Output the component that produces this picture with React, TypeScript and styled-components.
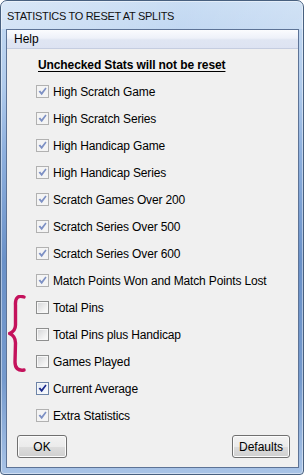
import React from "react";
import styled, { createGlobalStyle } from "styled-components";

type BoxState = "locked" | "on" | "off";

const stats: { label: string; state: BoxState }[] = [
  { label: "High Scratch Game", state: "locked" },
  { label: "High Scratch Series", state: "locked" },
  { label: "High Handicap Game", state: "locked" },
  { label: "High Handicap Series", state: "locked" },
  { label: "Scratch Games Over 200", state: "locked" },
  { label: "Scratch Series Over 500", state: "locked" },
  { label: "Scratch Series Over 600", state: "locked" },
  { label: "Match Points Won and Match Points Lost", state: "locked" },
  { label: "Total Pins", state: "off" },
  { label: "Total Pins plus Handicap", state: "off" },
  { label: "Games Played", state: "off" },
  { label: "Current Average", state: "on" },
  { label: "Extra Statistics", state: "locked" },
];

const GlobalStyle = createGlobalStyle`
  html, body {
    margin: 0;
    padding: 0;
    background: #ffffff;
  }
  body {
    font-family: "Liberation Sans", Arial, sans-serif;
  }
`;

function Tick({ locked }: { locked: boolean }) {
  return (
    <svg width="9" height="9" viewBox="0 0 9 9">
      <path
        d="M0.6 4.6 L2.2 3.4 L3.6 5.2 L7.4 0.4 L8.6 1.4 L3.7 8.2 Z"
        fill={locked ? "#7d90c4" : "#1c2a8c"}
      />
    </svg>
  );
}

function App() {
  return (
    <>
      <GlobalStyle />
      <Window>
        <TitleBar>STATISTICS TO RESET AT SPLITS</TitleBar>
        <Client>
          <MenuBar>
            <MenuItem>Help</MenuItem>
          </MenuBar>
          <Content>
            <Heading>Unchecked Stats will not be reset</Heading>
            <List>
              {stats.map((s) => (
                <Row key={s.label}>
                  <Box $state={s.state}>{s.state !== "off" && <Tick locked={s.state === "locked"} />}</Box>
                  <Label>{s.label}</Label>
                </Row>
              ))}
            </List>
            <ButtonRow>
              <Button $width={50}>OK</Button>
              <Button $width={58}>Defaults</Button>
            </ButtonRow>
            <Brace width="20" height="80" viewBox="0 0 20 80">
              <path
                d="M16 2 C10 0 7 3 7.5 10 L7.5 30 C7.5 35 5 37 1.5 38.5 C5 40 7.5 43 7.5 48 L7 67 C7 73 10 76 16 75"
                fill="none"
                stroke="#c4125c"
                strokeWidth="3.4"
                strokeLinecap="round"
                strokeLinejoin="round"
              />
            </Brace>
          </Content>
        </Client>
      </Window>
    </>
  );
}

export default App;

const Window = styled.div`
  box-sizing: border-box;
  width: 304px;
  height: 475px;
  display: flex;
  flex-direction: column;
  padding: 0 4px 6px 5px;
  border: 1px solid #48607f;
  border-radius: 7px 7px 4px 4px;
  background: linear-gradient(
    180deg,
    #c6dbf3 0%,
    #b0cbec 18%,
    #8eb0de 32%,
    #6a91c8 55%,
    #759acd 80%,
    #a9c4e7 100%
  );
  box-shadow: inset 0 0 0 1px rgba(255, 255, 255, 0.45);
`;

const TitleBar = styled.div`
  height: 28px;
  display: flex;
  align-items: center;
  font-size: 11px;
  letter-spacing: -0.3px;
  color: #111;
  margin: 0 -4px 0 -5px;
  padding: 1px 0 0 6px;
  background: linear-gradient(100deg, rgba(255, 255, 255, 0.35) 0%, rgba(255, 255, 255, 0.05) 60%, rgba(255, 255, 255, 0.2) 100%);
  border-radius: 6px 6px 0 0;
`;

const Client = styled.div`
  flex: 1;
  display: flex;
  flex-direction: column;
  border: 1px solid #5d7396;
  background: #f0f0f0;
`;

const MenuBar = styled.div`
  height: 18px;
  display: flex;
  align-items: center;
  border-bottom: 1px solid #c5cde0;
  background: linear-gradient(180deg, #fbfcfe 0%, #eef1f9 45%, #e0e6f3 55%, #dde3f2 100%);
`;

const MenuItem = styled.span`
  font-size: 12px;
  color: #000;
  padding-left: 7px;
`;

const Content = styled.div`
  position: relative;
  flex: 1;
  display: flex;
  flex-direction: column;
  padding: 8px 8px 9px 29px;
`;

const Heading = styled.div`
  height: 16px;
  line-height: 16px;
  margin-left: 2px;
  font-size: 12px;
  font-weight: bold;
  letter-spacing: -0.1px;
  text-decoration: underline;
  text-underline-offset: 2px;
  color: #000;
`;

const List = styled.div`
  display: flex;
  flex-direction: column;
  margin-top: 5px;
`;

const Row = styled.div`
  height: 27px;
  display: flex;
  align-items: center;
`;

const Box = styled.span<{ $state: BoxState }>`
  box-sizing: border-box;
  width: 13px;
  height: 13px;
  display: flex;
  align-items: center;
  justify-content: center;
  border: 1px solid ${(p) => (p.$state === "locked" ? "#b1b1b1" : p.$state === "on" ? "#6d84a8" : "#8e8f8f")};
  background: ${(p) =>
    p.$state === "locked"
      ? "#f4f4f4"
      : p.$state === "on"
      ? "linear-gradient(135deg, #dfe8f5 0%, #fafcff 100%)"
      : "linear-gradient(135deg, #d3d4d6 0%, #f3f3f3 70%, #fbfbfb 100%)"};
  box-shadow: inset 0 0 0 1px ${(p) => (p.$state === "locked" ? "#f4f4f4" : "#f7f7f7")};
`;

const Label = styled.span`
  margin-left: 4px;
  font-size: 12px;
  letter-spacing: -0.15px;
  color: #000;
  white-space: nowrap;
`;

const ButtonRow = styled.div`
  display: flex;
  justify-content: space-between;
  margin: 6px 0 0 -19px;
`;

const Button = styled.button<{ $width: number }>`
  box-sizing: border-box;
  width: ${(p) => p.$width}px;
  height: 23px;
  padding: 0;
  font-family: "Liberation Sans", Arial, sans-serif;
  font-size: 12px;
  color: #000;
  border: 1px solid #707070;
  border-radius: 3px;
  background: linear-gradient(180deg, #f2f2f2 0%, #ebebeb 50%, #dddddd 51%, #cfcfcf 100%);
  box-shadow: inset 0 0 0 1px #fcfcfc;
`;

const Brace = styled.svg`
  position: absolute;
  left: 1px;
  top: 246px;
`;
